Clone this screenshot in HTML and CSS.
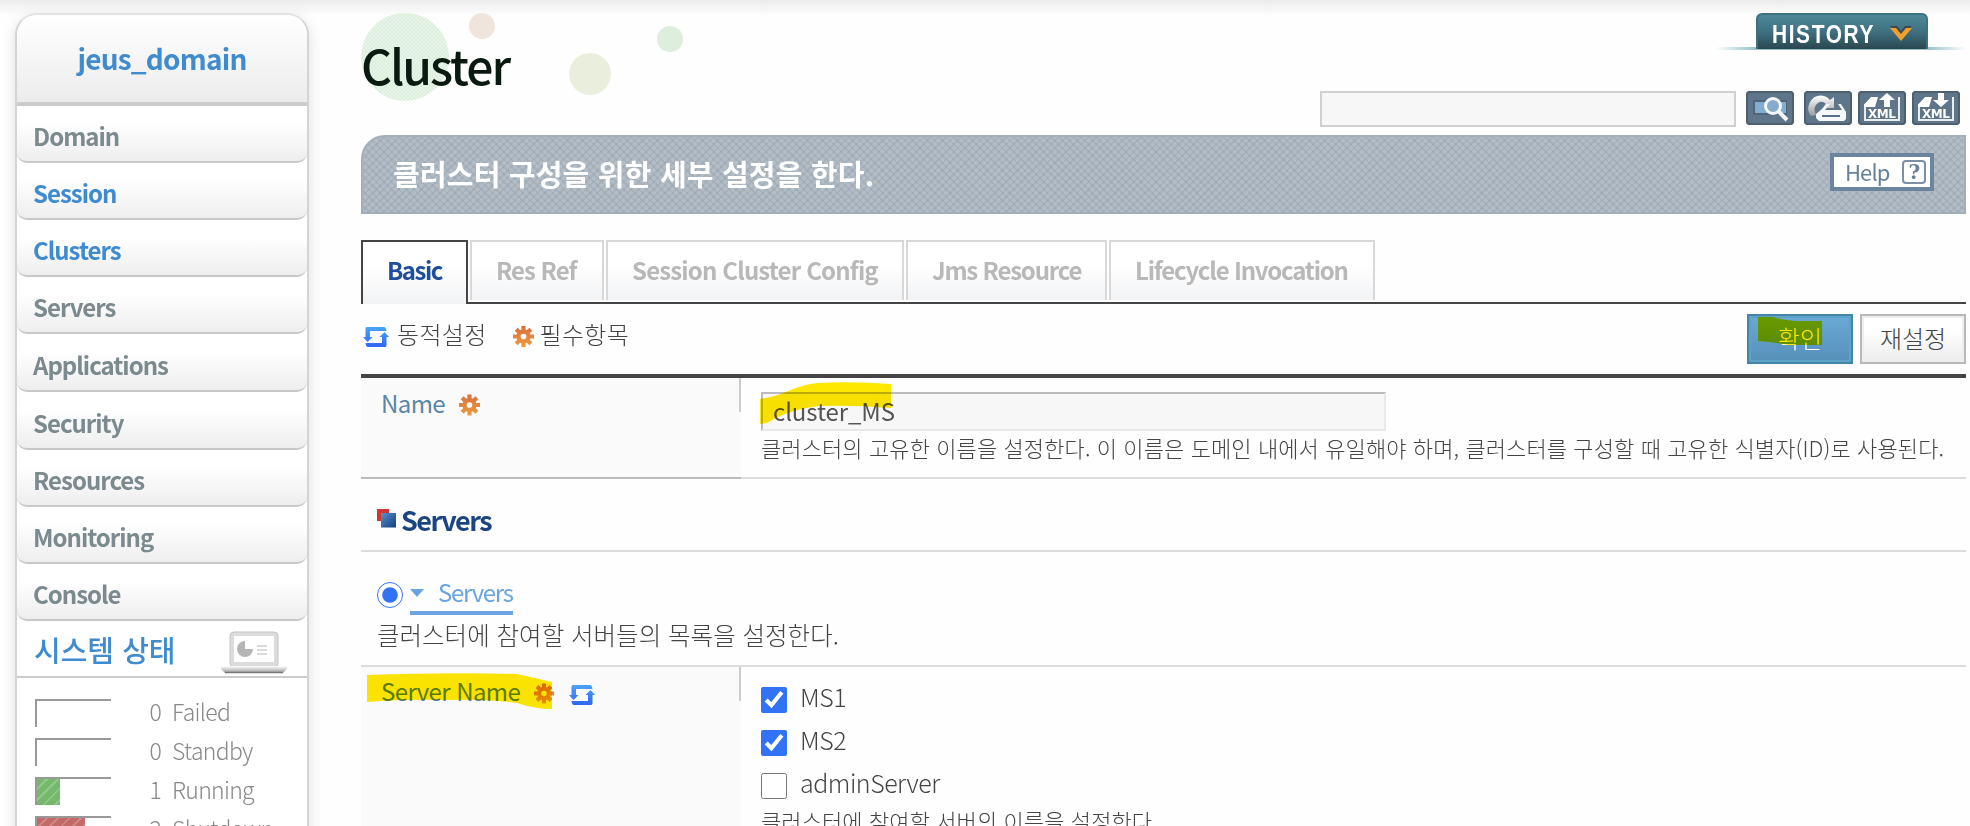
FILE: index.html
```html
<!DOCTYPE html>
<html lang="ko">
<head>
    <meta charset="UTF-8">
    <meta name="viewport" content="width=device-width, initial-scale=1.0">
    <title>Cluster</title>
    <link rel="stylesheet" href="styles.css">
</head>
<body>
    <!-- shared icons -->
    <svg class="defs" width="0" height="0">
        <defs>
            <linearGradient id="blue" x1="0" y1="0" x2="0" y2="1">
                <stop offset="0" stop-color="#4ba3fb"/>
                <stop offset="1" stop-color="#2f66f5"/>
            </linearGradient>
            <linearGradient id="orange" gradientUnits="userSpaceOnUse" x1="0" y1="0" x2="0" y2="20">
                <stop offset="0" stop-color="#dd6f3a"/>
                <stop offset="1" stop-color="#eb9a3f"/>
            </linearGradient>
            <linearGradient id="navy" x1="0" y1="0" x2="1" y2="1">
                <stop offset="0" stop-color="#5b8fce"/>
                <stop offset="1" stop-color="#163c7c"/>
            </linearGradient>
            <linearGradient id="grey" x1="0" y1="0" x2="0" y2="1">
                <stop offset="0" stop-color="#ffffff"/>
                <stop offset="1" stop-color="#9a9a9a"/>
            </linearGradient>
            <symbol id="dynamic" viewBox="0 0 26 22">
                <path fill="url(#blue)" d="M4 1H21Q23 1 23.500 5H7V11H9.500L4.500 16L0 11H2.500V3Q2.500 1 4 1ZM22 21H5Q3 21 2.500 17H19V11H16.500L21.500 6L26 11H23.500V19Q23.500 21 22 21Z"/>
            </symbol>
            <symbol id="gear" viewBox="0 0 20 20">
                <path fill="none" stroke="url(#orange)" stroke-width="4" d="M10 0V5M10 15V20M0 10H5M15 10H20M3 3L6.500 6.500M13.500 13.500L17 17M17 3L13.500 6.500M6.500 13.500L3 17"/>
                <circle cx="10" cy="10" r="4.700" fill="none" stroke="url(#orange)" stroke-width="4"/>
            </symbol>
        </defs>
    </svg>

    <div class="page">
        <aside class="sidebar">
            <div class="domain">jeus_domain</div>
            <ul class="menu">
                <li>Domain</li>
                <li class="on">Session</li>
                <li class="on">Clusters</li>
                <li>Servers</li>
                <li class="tall">Applications</li>
                <li class="tall">Security</li>
                <li>Resources</li>
                <li>Monitoring</li>
                <li>Console</li>
            </ul>
            <div class="status-title">
                <span>시스템 상태</span>
                <svg width="66" height="43" viewBox="0 0 66 43">
                    <rect x="9" y="1" width="48" height="35" rx="4" fill="#dcdcdc" stroke="#c4c4c4"/>
                    <rect x="13" y="5" width="40" height="26" fill="#fff"/>
                    <path d="M24 10V18H32A8 8 0 1 1 24 10Z" fill="#b5b5b5"/>
                    <path d="M36 15H46M36 19H46M36 23H46" stroke="#dadada" stroke-width="2"/>
                    <path d="M0 35H66V38L62 42H4L0 38Z" fill="url(#grey)"/>
                    <path d="M4 41.500H62" stroke="#777" stroke-width="1.500"/>
                </svg>
            </div>
            <div class="status">
                <div class="stat"><div class="bar"></div><span class="num">0</span><span>Failed</span></div>
                <div class="stat"><div class="bar"></div><span class="num">0</span><span>Standby</span></div>
                <div class="stat"><div class="bar"><div class="fill green" style="width: 23px"></div></div><span class="num">1</span><span>Running</span></div>
                <div class="stat"><div class="bar"><div class="fill red" style="width: 48px"></div></div><span class="num">2</span><span>Shutdown</span></div>
            </div>
        </aside>

        <main class="main">
            <header class="top">
                <div class="title-box">
                    <svg class="dots" width="330" height="92" viewBox="0 0 330 92">
                        <defs>
                            <pattern id="weave" width="4" height="4" patternUnits="userSpaceOnUse">
                                <rect width="4" height="4" fill="#e8f4e8"/>
                                <path d="M0 0H2V2H0ZM2 2H4V4H2Z" fill="#dcefdd"/>
                            </pattern>
                        </defs>
                        <circle cx="44" cy="44" r="44" fill="url(#weave)"/>
                        <circle cx="121" cy="13" r="13" fill="#efe5dc"/>
                        <circle cx="229" cy="61" r="21" fill="#eaefdd"/>
                        <circle cx="309" cy="26" r="13" fill="#ddeedd"/>
                    </svg>
                    <h1>Cluster</h1>
                </div>
                <div class="tools">
                    <div class="history">
                        <div class="history-tab">
                            <svg width="104" height="24" viewBox="0 0 104 24"><text class="history-text" x="0" y="21" textLength="103" lengthAdjust="spacingAndGlyphs">HISTORY</text></svg>
                            <svg width="24" height="16" viewBox="0 0 24 16"><path d="M1 0H8L12 5L16 0H23L12 11Z" fill="#3a4a50"/><path d="M1 2H7L12 8L17 2H23L12 15Z" fill="#f0a030"/></svg>
                        </div>
                    </div>
                    <div class="search">
                        <input type="text" class="search-box">
                        <div class="tool find">
                            <svg width="48" height="34" viewBox="0 0 48 34"><rect x="7" y="9" width="34" height="15" fill="#50657a"/><rect x="9" y="11" width="31" height="11" fill="#84acce"/><circle cx="27" cy="15" r="7.500" fill="#84acce" stroke="#f4f6f8" stroke-width="3"/><path d="M32 20L41 29" stroke="#f4f6f8" stroke-width="4"/></svg>
                        </div>
                        <div class="tool">
                            <svg width="48" height="34" viewBox="0 0 48 34"><path d="M7 25Q2 19 6 11Q11 3 20 5Q24 6 26 9L30 6V17H19L22 13Q18 9 14 12Q8 16 12 24Z" fill="url(#grey)"/><path d="M18 18L22 13H26L21 19H38L34 13H37L42 21V28L40 30H15L12 27V23Z" fill="#f5f7f8"/><path d="M18 25H36" stroke="#5b7186" stroke-width="2"/></svg>
                        </div>
                        <div class="tool">
                            <svg width="48" height="34" viewBox="0 0 48 34"><path d="M19 7H14L7 14V29H41V6" fill="none" stroke="#e8edf0" stroke-width="2"/><path d="M13 6H20L17 16H6V14Z" fill="#fff"/><path d="M29 2L37 9H32V16H26V9H21Z" fill="#fff"/><text class="xml" x="10" y="27" textLength="28">XML</text></svg>
                        </div>
                        <div class="tool">
                            <svg width="48" height="34" viewBox="0 0 48 34"><path d="M19 7H14L7 14V29H41V6" fill="none" stroke="#e8edf0" stroke-width="2"/><path d="M13 6H20L17 16H6V14Z" fill="#fff"/><path d="M29 16L37 9H32V2H26V9H21Z" fill="#fff"/><text class="xml" x="10" y="27" textLength="28">XML</text></svg>
                        </div>
                    </div>
                </div>
            </header>

            <div class="banner">
                <span class="banner-text">클러스터 구성을 위한 세부 설정을 한다.</span>
                <div class="help"><span>Help</span><b>?</b></div>
            </div>

            <nav class="tabs">
                <div class="tab active">Basic</div>
                <div class="tab res">Res Ref</div>
                <div class="tab session">Session Cluster Config</div>
                <div class="tab jms">Jms Resource</div>
                <div class="tab life">Lifecycle Invocation</div>
            </nav>

            <div class="actions">
                <svg class="dyn" width="26" height="22"><use href="#dynamic"/></svg>
                <span class="legend">동적설정</span>
                <svg class="gear" width="21" height="21"><use href="#gear"/></svg>
                <span class="legend required">필수항목</span>
                <button class="btn ok">확인
                    <svg class="mark" width="64" height="28" viewBox="0 0 64 28"><path d="M0 0H15Q30 4 40 4H64V28H30Q15 25 0 24Z"/></svg>
                </button>
                <button class="btn reset">재설정</button>
            </div>

            <section class="row name-row">
                <div class="label"><span>Name</span><svg class="gear" width="21" height="22"><use href="#gear"/></svg></div>
                <div class="value">
                    <div class="field">
                        <input type="text" class="name-box" value="cluster_MS">
                        <svg class="mark" width="133" height="43" viewBox="0 0 133 43"><path d="M1 17Q15 15 27 10Q42 3 58 1Q95 -1 132 2V26Q95 23 60 24Q28 28 8 41L1 42Z"/></svg>
                    </div>
                    <p class="desc">클러스터의 고유한 이름을 설정한다. 이 이름은 도메인 내에서 유일해야 하며, 클러스터를 구성할 때 고유한 식별자(ID)로 사용된다.</p>
                </div>
            </section>

            <h2 class="section-title">
                <svg width="19" height="19" viewBox="0 0 19 19"><path d="M0 0H12V4H4V12H0Z" fill="#d5342f"/><rect x="4" y="4" width="15" height="14.500" fill="url(#navy)"/></svg>
                <span>Servers</span>
            </h2>

            <section class="choice">
                <div class="choice-line">
                    <input type="radio" checked>
                    <a class="toggle"><svg width="14" height="8" viewBox="0 0 14 8"><path d="M0 0H14L7 8Z" fill="#6aa5e2"/></svg><span>Servers</span></a>
                </div>
                <p>클러스터에 참여할 서버들의 목록을 설정한다.</p>
            </section>

            <section class="row server-row">
                <div class="label">
                    <span>Server Name</span><svg class="gear" width="20" height="21"><use href="#gear"/></svg><svg class="dyn" width="26" height="22"><use href="#dynamic"/></svg>
                    <svg class="mark" width="186" height="37" viewBox="0 0 186 37"><path d="M0 2Q80 -1 150 1Q168 5 185 9V36Q168 36 150 30Q120 26 80 27Q35 26 0 29Z"/></svg>
                </div>
                <div class="value">
                    <label><input type="checkbox" checked><span>MS1</span></label>
                    <label><input type="checkbox" checked><span>MS2</span></label>
                    <label><input type="checkbox"><span>adminServer</span></label>
                    <p class="desc">클러스터에 참여할 서버의 이름을 설정한다.</p>
                </div>
            </section>
        </main>
    </div>
</body>
</html>
```
FILE: styles.css
```css
* {
    box-sizing: border-box;
}
body {
    margin: 0;
    height: 826px;
    overflow: hidden;
    font-family: "Noto Sans CJK KR", sans-serif;
    font-weight: 300;
    color: #444;
    background: linear-gradient(#ececec, #fefefe 16px);
}
ul, p, h1, h2 {
    margin: 0;
    padding: 0;
}
.defs {
    position: absolute;
}
.page {
    display: flex;
}
.mark {
    position: absolute;
    fill: #ffe800;
    mix-blend-mode: multiply;
    pointer-events: none;
}

/* sidebar */
.sidebar {
    width: 294px;
    height: 850px;
    margin: 13px 52px 0 15px;
    border: 2px solid #d4d4d4;
    border-top-color: #e2e2e2;
    border-radius: 22px 22px 0 0;
    box-shadow: 0 4px 14px rgba(0, 0, 0, 0.13);
    background: #fff;
    overflow: hidden;
}
.domain {
    height: 91px;
    padding-top: 4px;
    line-height: 78px;
    text-align: center;
    font-size: 28px;
    font-weight: 700;
    letter-spacing: -0.8px;
    color: #3f8bd0;
    background: linear-gradient(#fff, #ececec);
    border-bottom: 4px solid #ccc;
}
.menu {
    list-style: none;
}
.menu li {
    height: 57px;
    padding-left: 16px;
    line-height: 60px;
    font-size: 24px;
    font-weight: 700;
    letter-spacing: -1px;
    color: #7b8a8f;
    background: linear-gradient(#fff 30%, #eee);
    border-bottom: 2px solid #c8c8c8;
    border-radius: 0 0 10px 10px;
}
.menu li.on {
    color: #3f8bd0;
}
.menu li.tall {
    height: 58px;
    line-height: 61px;
}
.status-title {
    display: flex;
    justify-content: space-between;
    height: 57px;
    padding: 10px 20px 0 17px;
    line-height: 36px;
    font-size: 29px;
    font-weight: 500;
    color: #3f8bd0;
    border-bottom: 2px solid #ccc;
}
.status {
    padding: 21px 0 0 18px;
}
.stat {
    display: flex;
    height: 39px;
    line-height: 24px;
    font-size: 23px;
    letter-spacing: -0.7px;
    color: #888;
}
.bar {
    width: 76px;
    height: 28px;
    border-top: 2px solid #999;
    border-left: 2px solid #999;
}
.fill {
    height: 26px;
}
.green {
    background: repeating-linear-gradient(135deg, #76b96d 0 6px, #90c889 6px 8px);
}
.red {
    background: repeating-linear-gradient(135deg, #c16a67 0 6px, #d08683 6px 8px);
}
.num {
    width: 50px;
    margin-right: 11px;
    text-align: right;
}

/* page header */
.main {
    width: 1605px;
}
.top {
    display: flex;
    justify-content: space-between;
    height: 135px;
    padding-top: 13px;
}
.title-box {
    position: relative;
}
.dots {
    position: absolute;
    left: 0;
    top: 0;
}
h1 {
    position: relative;
    padding-top: 23px;
    line-height: 56px;
    font-size: 48px;
    font-weight: 500;
    letter-spacing: -2px;
    color: #0a1a10;
}
.history {
    display: flex;
    justify-content: flex-end;
    width: 250px;
    height: 37px;
    margin-left: auto;
    padding-right: 38px;
    background: linear-gradient(90deg, transparent, #9cc3cd 15%, #9cc3cd 85%, transparent) 0 34px / 100% 3px no-repeat;
}
.history-tab {
    display: flex;
    align-items: center;
    justify-content: space-between;
    width: 172px;
    height: 36px;
    padding: 4px 13px 0 14px;
    background: linear-gradient(#4f8899, #3f7080 50%, #2a4650);
    border: 2px solid #3c7180;
    border-bottom: 0;
    border-radius: 6px 6px 0 0;
}
.history-text {
    font: 700 26px "Liberation Sans", sans-serif;
    letter-spacing: 2px;
    fill: #fff;
}
.search {
    display: flex;
    gap: 6px;
    padding: 41px 6px 0 0;
}
.search-box {
    width: 416px;
    height: 36px;
    margin-right: 4px;
    background: #f7f7f7;
    border: 2px solid #d0d0d0;
}
.tool {
    width: 48px;
    height: 34px;
    border-radius: 4px;
    background: #5f768a;
    box-shadow: inset 0 0 0 2px #4d6072;
}
.find {
    margin-right: 4px;
}
.tool svg {
    display: block;
}
.xml {
    font: 700 12px "DejaVu Sans", sans-serif;
    fill: #fff;
}

.banner {
    display: flex;
    justify-content: space-between;
    height: 79px;
    padding: 16px 30px 0;
    border: 2px solid #a2afbb;
    border-radius: 24px 0 0 0;
    background:
        repeating-linear-gradient(45deg, transparent 0 3.500px, rgba(140, 153, 166, 0.3) 3.500px 5.300px),
        repeating-linear-gradient(-45deg, transparent 0 3.500px, rgba(140, 153, 166, 0.3) 3.500px 5.300px),
        #b3bdc7;
}
.banner-text {
    line-height: 40px;
    font-size: 29px;
    font-weight: 700;
    letter-spacing: 0.2px;
    color: #fff;
}
.help {
    display: flex;
    justify-content: space-between;
    width: 104px;
    height: 38px;
    padding: 2px 4px 0 11px;
    line-height: 24px;
    font-size: 22px;
    font-weight: 400;
    letter-spacing: -0.9px;
    color: #67819b;
    background: #fff;
    border: 4px solid #6b859d;
}
.help b {
    width: 24px;
    height: 24px;
    margin-top: 1px;
    line-height: 20px;
    text-align: center;
    font-family: "DejaVu Serif", serif;
    font-size: 20px;
    border: 2px solid #7b90a4;
    border-radius: 4px;
}

/* tabs */
.tabs {
    display: flex;
    gap: 2px;
    height: 64px;
    margin-top: 26px;
    background: linear-gradient(#444, #444) 107px 62px no-repeat;
}
.tab {
    height: 60px;
    padding: 0 0 0 24px;
    line-height: 56px;
    font-size: 24px;
    font-weight: 700;
    letter-spacing: -1px;
    color: #b8b8b8;
    white-space: nowrap;
    background: linear-gradient(#fff 40%, #f2f3f5);
    border: 2px solid #d8d8d8;
    border-bottom: 0;
}
.tab.active {
    width: 107px;
    height: 64px;
    letter-spacing: -1.500px;
    color: #1f4f9a;
    border-color: #444;
}
.res {
    width: 134px;
}
.session {
    width: 298px;
    letter-spacing: -0.850px;
}
.jms {
    width: 201px;
    letter-spacing: -1.200px;
}
.life {
    width: 266px;
    letter-spacing: -1.200px;
}

/* legend and buttons */
.actions {
    display: flex;
    height: 74px;
    padding: 10px 0 0 2px;
    border-bottom: 4px solid #444;
}
.actions .dyn,
.actions .gear {
    margin-top: 12px;
}
.actions .gear {
    margin-left: 26px;
}
.legend {
    margin-left: 8px;
    line-height: 39px;
    font-size: 24px;
    letter-spacing: 0.3px;
}
.required {
    margin-left: 6px;
}
.btn {
    position: relative;
    width: 106px;
    height: 50px;
    padding: 0 0 3px;
    font-family: inherit;
    font-size: 24px;
    font-weight: 300;
    line-height: 42px;
}
.ok {
    margin-left: auto;
    color: #fff;
    background: linear-gradient(#6aaad5, #5590b8);
    border: 2px solid #4486aa;
    box-shadow: inset 0 0 0 2px #5fa2c8;
}
.ok .mark {
    left: 9px;
    top: 1px;
}
.reset {
    margin-left: 7px;
    color: #444;
    background: linear-gradient(#fff 30%, #ececec);
    border: 2px solid #b8b8b8;
    box-shadow: inset 0 0 0 2px #eee;
}

/* form rows */
.row {
    display: flex;
}
.label {
    position: relative;
    display: flex;
    width: 380px;
    padding-left: 20px;
    font-size: 24px;
    font-weight: 400;
    letter-spacing: -0.6px;
    color: #5a86a5;
    background: linear-gradient(#ccc, #ccc) right top / 2px 34px no-repeat #fafafa;
}
.value {
    flex: 1;
    padding-left: 20px;
}
.desc {
    white-space: nowrap;
    font-size: 22px;
    letter-spacing: 0.1px;
}
.name-row {
    height: 101px;
}
.name-row .label {
    line-height: 49px;
    border-bottom: 2px solid #bbb;
}
.name-row .gear {
    margin: 16px 0 0 14px;
}
.name-row .value {
    padding-top: 14px;
    border-bottom: 2px solid #dcdcdc;
}
.field {
    position: relative;
}
.field .mark {
    left: -2px;
    top: -10px;
}
.name-box {
    display: block;
    width: 625px;
    height: 39px;
    padding: 0 10px 2px;
    font-family: inherit;
    font-size: 24px;
    font-weight: 400;
    letter-spacing: -0.1px;
    color: #555;
    background: #f7f7f7;
    border: 2px solid #e8e8e8;
    border-top-color: #bbb;
    border-left-color: #bbb;
}
.name-row .desc {
    line-height: 32px;
}
.section-title {
    display: flex;
    height: 73px;
    padding: 30px 0 0 16px;
    line-height: 21px;
    font-size: 27px;
    font-weight: 700;
    letter-spacing: -1.500px;
    color: #1b4582;
    border-bottom: 2px solid #dcdcdc;
}
.section-title span {
    margin-left: 5px;
}
.choice {
    height: 115px;
    padding: 30px 0 0 16px;
    border-bottom: 2px solid #dcdcdc;
}
.choice-line {
    display: flex;
    height: 33px;
}
.choice-line input,
.value label input {
    width: 26px;
    height: 26px;
    margin: 0;
    accent-color: #3273f6;
}
.toggle {
    display: flex;
    margin-left: 7px;
    line-height: 19px;
    font-size: 24px;
    font-weight: 400;
    letter-spacing: -1.300px;
    color: #6aa5e2;
    border-bottom: 4px solid #6aa5e2;
}
.toggle svg {
    margin: 7px 14px 0 0;
}
.choice p {
    line-height: 39px;
    font-size: 24.500px;
}
.server-row {
    height: 180px;
}
.server-row .label {
    line-height: 48px;
}
.server-row .gear {
    margin: 16px 0 0 14px;
}
.server-row .dyn {
    margin: 17px 0 0 15px;
}
.server-row .mark {
    left: 6px;
    top: 6px;
}
.server-row .value {
    padding-top: 20px;
}
.value label {
    display: flex;
    height: 43px;
    line-height: 19px;
    font-size: 25px;
    letter-spacing: -0.5px;
}
.value label span {
    margin-left: 13px;
}
.server-row .desc {
    margin-top: -13px;
    line-height: 34px;
}
```
